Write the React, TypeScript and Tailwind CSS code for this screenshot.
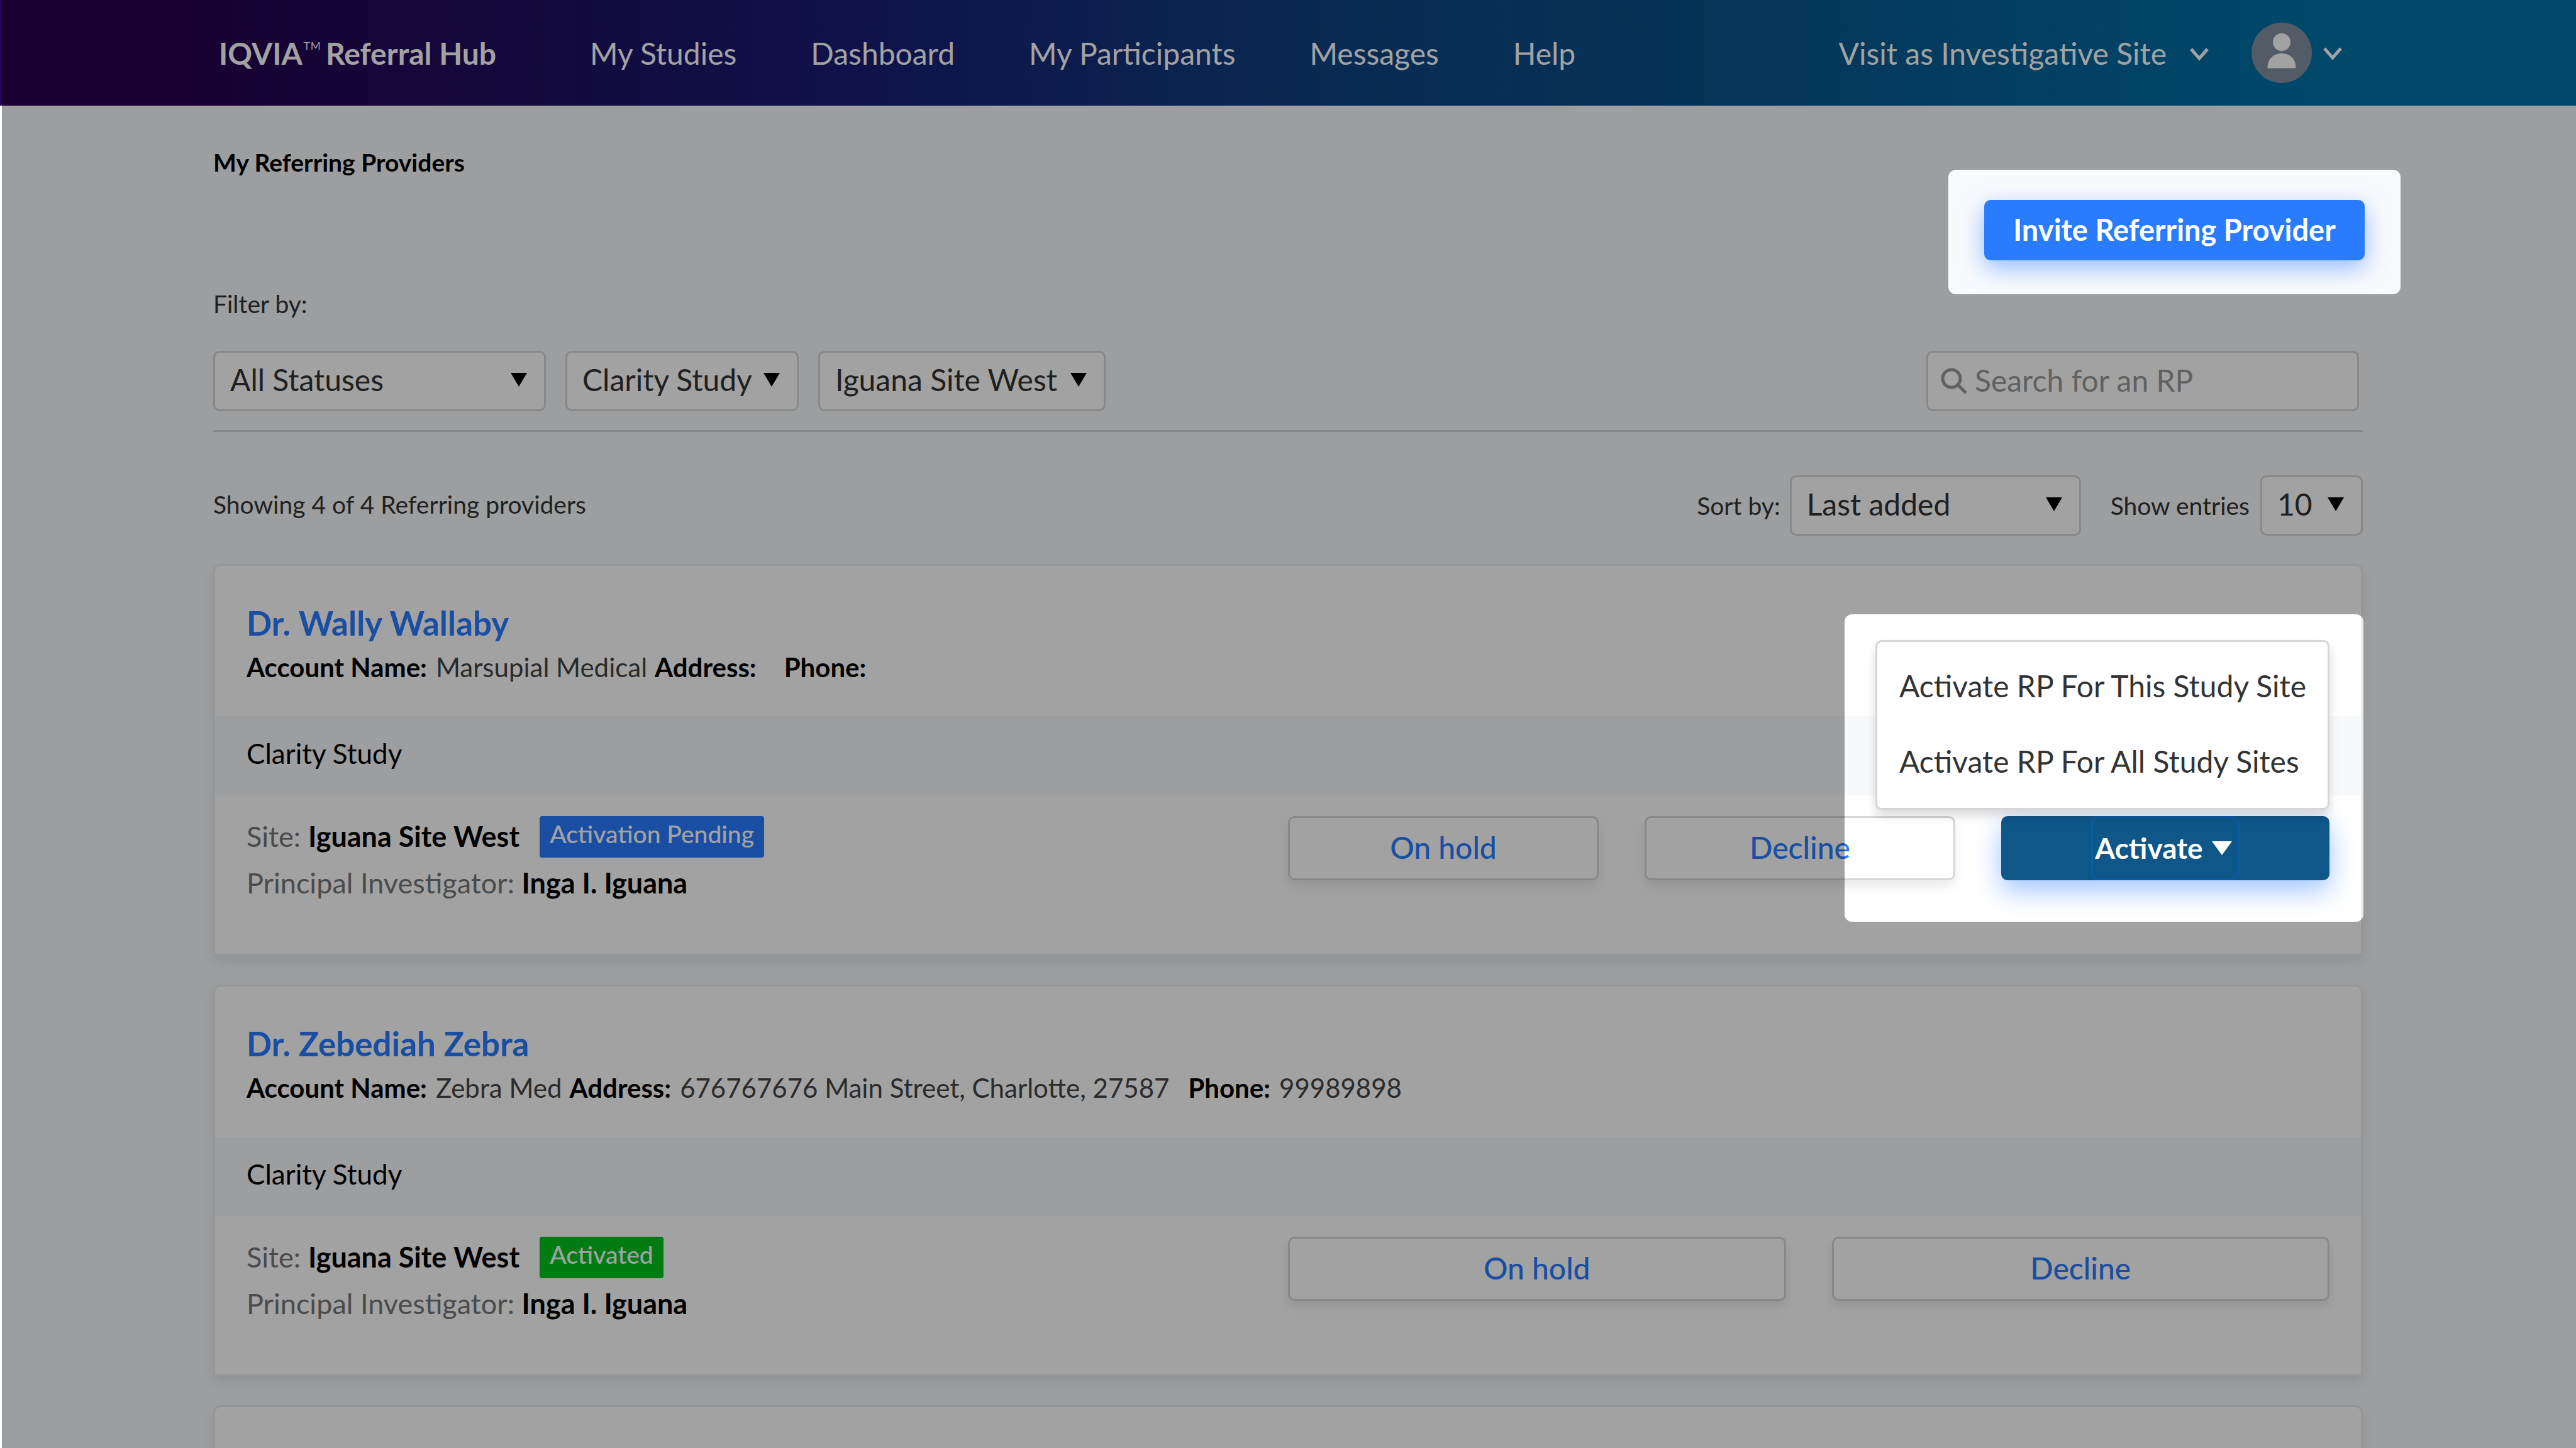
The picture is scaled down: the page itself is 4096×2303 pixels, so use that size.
import React from "react";

function Caret({ light = false }: { light?: boolean }) {
  return (
    <svg viewBox="0 0 26 22" className={light ? "h-[22px] w-[32px] shrink-0" : "h-[22px] w-[26px] shrink-0"} preserveAspectRatio="none" aria-hidden="true">
      <path d="M0 0h26L13 22z" fill={light ? "#fff" : "#000"} />
    </svg>
  );
}

function Chevron() {
  return (
    <svg viewBox="0 0 32 22" className="mt-[4px] h-[22px] w-[32px] shrink-0" fill="none" stroke="#fff" strokeWidth="5" aria-hidden="true">
      <path d="M3 2l13 15L29 2" />
    </svg>
  );
}

function Select({ id, label, options, width }: { id: string; label: string; options: string[]; width: string }) {
  return (
    <div className={`relative flex items-center ${width}`}>
      <select
        id={id}
        aria-label={label}
        className="h-[96px] w-full appearance-none rounded-[10px] border-[3px] border-[#d6d6d6] bg-white pb-[4px] pl-[24px] text-[48px] leading-[56px] text-[#333]"
      >
        {options.map((o) => (
          <option key={o}>{o}</option>
        ))}
      </select>
      <span className="pointer-events-none absolute right-[30px] pb-[4px]">
        <Caret />
      </span>
    </div>
  );
}

const outline =
  "flex h-[102px] flex-1 items-center justify-center rounded-[10px] border-[3px] border-[#d6d6d6] bg-white pb-[2px] text-[48px] leading-[56px] font-medium text-[#2a7cff] shadow-[0_10px_16px_rgba(0,0,0,0.08)]";

type Provider = {
  name: string;
  account: string;
  address: string;
  phone: string;
  status: string;
  pending: boolean;
};

const providers: Provider[] = [
  { name: "Dr. Wally Wallaby", account: "Marsupial Medical", address: "", phone: "", status: "Activation Pending", pending: true },
  { name: "Dr. Zebediah Zebra", account: "Zebra Med", address: "676767676 Main Street, Charlotte, 27587", phone: "99989898", status: "Activated", pending: false },
];

const cardBox = "rounded-t-[12px] border-[3px] border-[#ebecee] bg-white shadow-[0_10px_20px_rgba(0,0,0,0.08)]";

function Card({ p }: { p: Provider }) {
  return (
    <article className={cardBox}>
      <header className="h-[239px] px-[50px] pt-[61px]">
        <h2 className="text-[53px] leading-[60px] font-bold">
          <a href="#provider" className="text-[#2a7cff]">{p.name}</a>
        </h2>
        <p className="mt-[16px] flex text-[42px] leading-[48px] text-[#444]">
          <b className="text-black">Account Name:</b>
          <span className="ml-[14px]">{p.account}</span>
          <b className="ml-[12px] text-black">Address:</b>
          <span className="ml-[14px]">{p.address}</span>
          <b className="ml-[30px] text-black">Phone:</b>
          <span className="ml-[14px]">{p.phone}</span>
        </p>
      </header>
      <h3 className="flex h-[126px] items-center bg-[#f7f9fb] px-[50px] pb-[8px] text-[44px] leading-[52px] text-black">Clarity Study</h3>
      <div className="flex h-[252px] items-start px-[50px] pt-[33px]">
        <div className="flex-1 text-[45px] text-[#777]">
          <div className="flex h-[66px] items-center">
            <span>Site:</span>
            <b className="ml-[12px] text-black">Iguana Site West</b>
            <span className={`ml-[32px] flex h-[66px] items-start rounded-[4px] px-[16px] pt-[4px] text-[39px] leading-[48px] font-medium text-white ${p.pending ? "bg-[#2a7cff]" : "bg-[#00c41d]"}`}>{p.status}</span>
          </div>
          <p className="mt-[14px] leading-[52px]">
            Principal Investigator: <b className="text-black">Inga I. Iguana</b>
          </p>
        </div>
        <div className="relative flex flex-1 gap-[73px]">
          <button className={outline}>On hold</button>
          <button className={outline}>Decline</button>
          {p.pending && (
            <>
              <button className="flex h-[102px] w-[522px] items-center justify-center rounded-[10px] bg-[#0f5689] text-[46px] leading-[56px] font-bold text-white shadow-[0_16px_40px_rgba(42,124,255,0.45)]">
                <span className="flex h-[102px] items-center gap-[14px] rounded-[10px] border-[3px] border-[#0d5ba0] pr-[9px] pl-[3px]">
                  Activate
                  <Caret light />
                </span>
              </button>
              <ul role="menu" className="absolute right-0 bottom-[112px] w-[722px] rounded-[10px] border-[3px] border-[#d6d6d6] bg-white pt-[10px] pb-[14px] shadow-[0_10px_16px_rgba(0,0,0,0.14)]">
                <li className="flex h-[120px] items-center pl-[35px] text-[48px] leading-[56px] text-[#333]">
                  <button>Activate RP For This Study Site</button>
                </li>
                <li className="flex h-[120px] items-center pl-[35px] text-[48px] leading-[56px] text-[#333]">
                  <button>Activate RP For All Study Sites</button>
                </li>
              </ul>
              <div className="pointer-events-none absolute -right-[54px] -bottom-[66px] z-10 h-[489px] w-[825px] rounded-[12px] shadow-[0_0_0_5000px_rgba(0,0,0,0.365)]" />
            </>
          )}
        </div>
      </div>
    </article>
  );
}

export default function App() {
  return (
    <div className="flex h-screen overflow-hidden bg-[#f7f9fb] font-['Lato',sans-serif] text-[#333]">
      <div className="w-[3px] shrink-0 bg-white">
        <div className="h-[168px] bg-[#26005a]" />
      </div>
      <div className="relative flex-1 overflow-hidden">
        <header className="flex h-[168px] items-center bg-[linear-gradient(90deg,#26004c_0%,#26004c_6%,#181c73_33%,#104080_50%,#09528a_66%,#0073a8_90%,#0073a8_100%)] pr-[371px] pl-[345px] text-[48px] leading-[56px] text-white">
          <a href="#home" className="flex pt-[2px] font-bold">
            IQVIA
            <span className="mr-[6px] text-[42px] leading-[48px] font-light">™</span>
            Referral Hub
          </a>
          <nav className="ml-[149px] flex gap-[118px] pt-[2px]">
            <a href="#studies">My Studies</a>
            <a href="#dashboard">Dashboard</a>
            <a href="#participants">My Participants</a>
            <a href="#messages">Messages</a>
            <a href="#help">Help</a>
          </nav>
          <button className="ml-auto flex items-center gap-[36px] pt-[2px]">
            Visit as Investigative Site
            <Chevron />
          </button>
          <button aria-label="Account" className="ml-[67px] flex items-center gap-[17px]">
            <svg viewBox="0 0 96 96" className="size-[96px]" aria-hidden="true">
              <circle cx="48" cy="48" r="48" fill="#838fa3" />
              <circle cx="48" cy="31" r="14" fill="#fff" />
              <path d="M25.500 71.500C25.500 58 35 49 48 49s22.500 9 22.500 22.500q0 1-1 1h-43q-1 0-1-1z" fill="#fff" />
            </svg>
            <Chevron />
          </button>
        </header>

        <main className="pr-[339px] pl-[336px]">
          <div className="flex h-[390px] justify-between">
            <div className="pt-[66px]">
              <h1 className="text-[39px] leading-[48px] font-bold text-black">My Referring Providers</h1>
              <p className="mt-[177px] text-[39px] leading-[48px]">Filter by:</p>
            </div>
            <div className="relative z-20 -mr-[60px] mt-[102px] h-[198px] w-[719px] rounded-[12px] bg-[#f9fafc] px-[57px] pt-[48px]">
              <button className="h-[96px] w-full rounded-[10px] bg-[#2a7cff] pb-[2px] text-[47px] leading-[56px] font-bold text-white shadow-[0_12px_36px_rgba(42,124,255,0.5)]">Invite Referring Provider</button>
            </div>
          </div>

          <div className="flex gap-[31px] border-b-[3px] border-[#d6d6d6] pr-[6px] pb-[30px]">
            <Select id="status" label="Status" options={["All Statuses"]} width="w-[529px]" />
            <Select id="study" label="Study" options={["Clarity Study"]} width="w-[371px]" />
            <Select id="site" label="Site" options={["Iguana Site West"]} width="w-[457px]" />
            <div className="relative ml-auto flex w-[688px] items-center">
              <svg viewBox="0 0 42 42" className="absolute left-[23px] size-[42px]" fill="none" stroke="#999" strokeWidth="5" aria-hidden="true">
                <circle cx="17" cy="17" r="14" />
                <path d="M27 27l13 13" />
              </svg>
              <input aria-label="Search for an RP" placeholder="Search for an RP" className="h-[96px] w-full rounded-[10px] border-[3px] border-[#d6d6d6] bg-white pb-[4px] pl-[74px] text-[48px] leading-[56px] placeholder:text-[#999]" />
            </div>
          </div>

          <div className="flex items-center pt-[69px] pb-[45px] text-[39px] leading-[48px]">
            <p className="pb-[4px]">Showing 4 of 4 Referring providers</p>
            <label htmlFor="sort" className="mr-[15px] ml-auto">Sort by:</label>
            <Select id="sort" label="Sort by" options={["Last added"]} width="w-[463px]" />
            <label htmlFor="entries" className="mr-[17px] ml-[47px]">Show entries</label>
            <Select id="entries" label="Show entries" options={["10"]} width="w-[163px]" />
          </div>

          <div className="flex flex-col gap-[46px]">
            {providers.map((p) => (
              <Card key={p.name} p={p} />
            ))}
            <article className={`${cardBox} h-[623px]`} />
          </div>
        </main>
      </div>
    </div>
  );
}
